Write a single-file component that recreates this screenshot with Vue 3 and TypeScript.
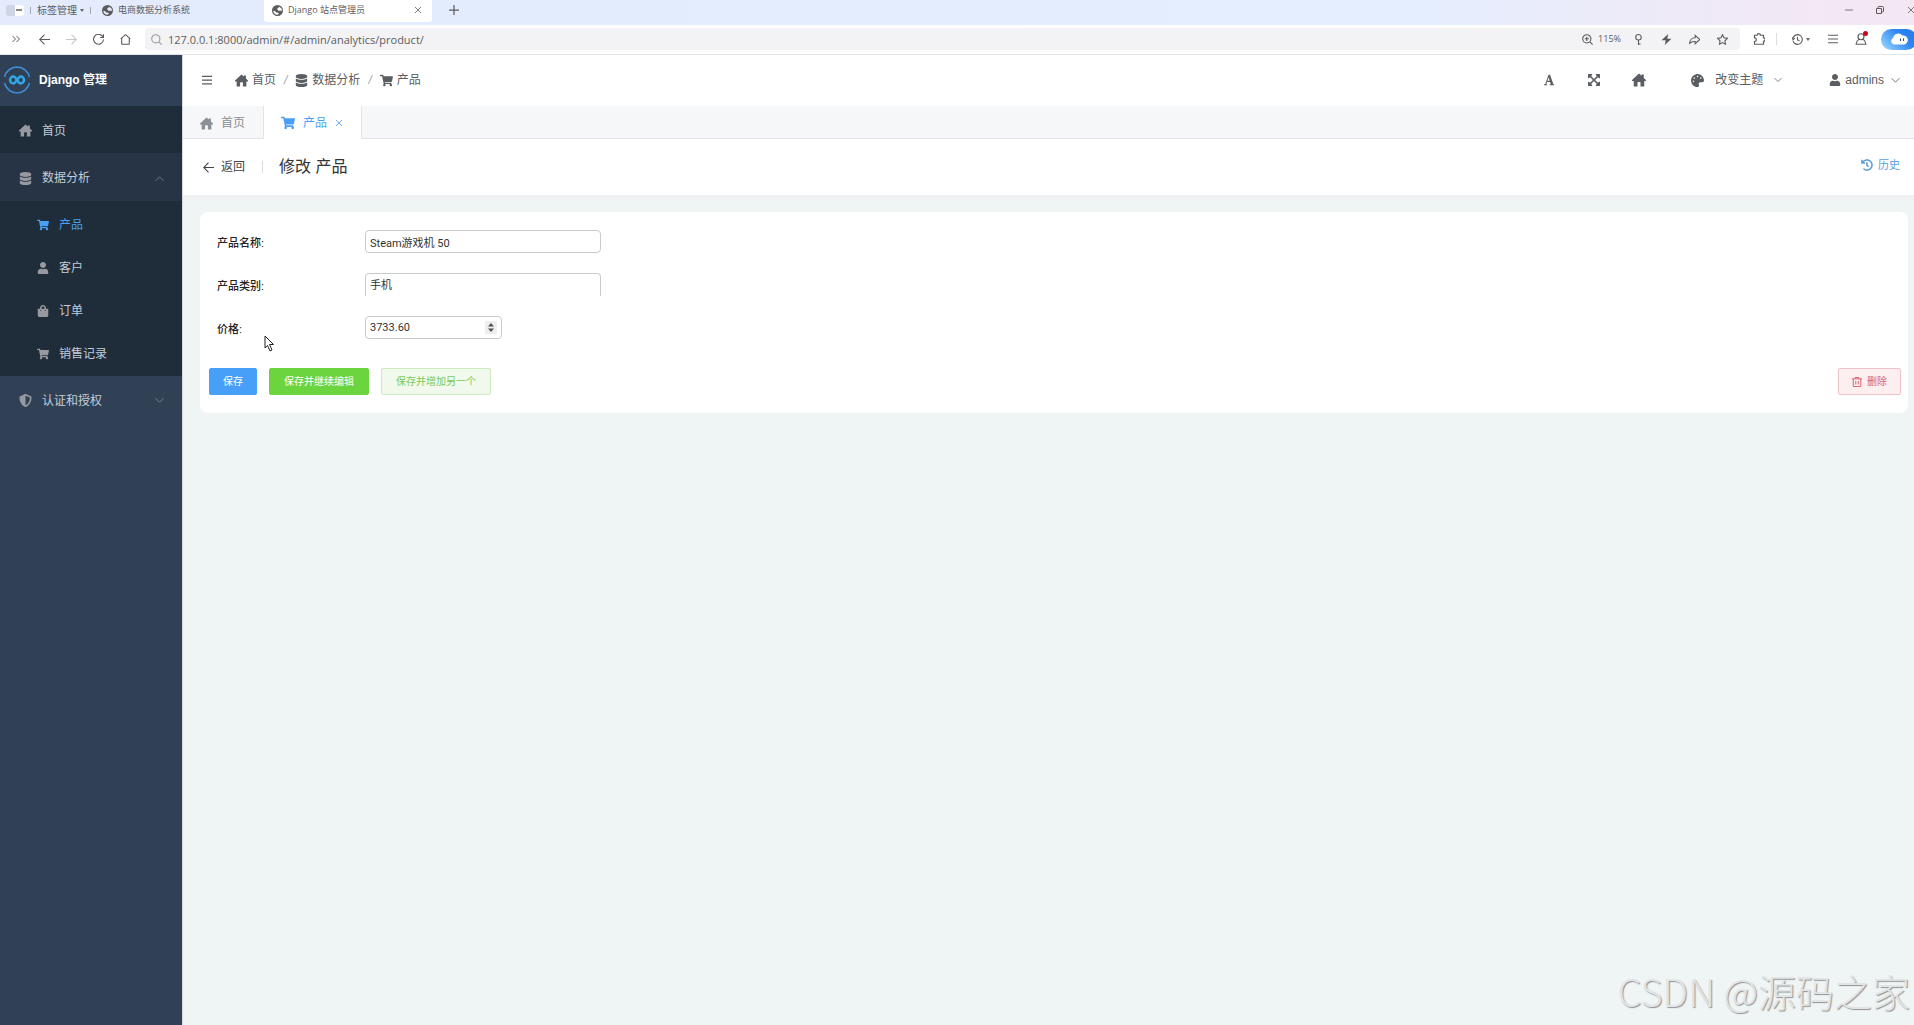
<script setup lang="ts">
import { h, ref, type FunctionalComponent } from 'vue'

interface Glyph { box: string; d: string; line?: boolean }

const glyphs: Record<string, Glyph> = {
  home: { box: '0 0 28 26', d: 'M14 0 L19 4.6 V2 H23.5 V8.8 L28 13 V15 H24.5 V26 H17 V18 Q17 17 16 17 H12 Q11 17 11 18 V26 H3.5 V15 H0 V13 Z' },
  database: { box: '0 0 448 512', d: 'M448 73.143v45.714C448 159.143 347.667 192 224 192S0 159.143 0 118.857V73.143C0 32.857 100.333 0 224 0s224 32.857 224 73.143zM448 176v102.857C448 319.143 347.667 352 224 352S0 319.143 0 278.857V176c48.125 33.143 136.208 48.572 224 48.572S399.874 209.143 448 176zm0 160v102.857C448 479.143 347.667 512 224 512S0 479.143 0 438.857V336c48.125 33.143 136.208 48.572 224 48.572S399.874 369.143 448 336z' },
  cart: { box: '0 0 576 512', d: 'M528.12 301.319l47.273-208C578.806 78.301 567.391 64 551.99 64H159.208l-9.166-44.81C147.758 8.021 137.93 0 126.529 0H24C10.745 0 0 10.745 0 24v16c0 13.255 10.745 24 24 24h69.883l70.248 343.435C147.325 417.1 136 435.222 136 456c0 30.928 25.072 56 56 56s56-25.072 56-56c0-15.674-6.447-29.835-16.824-40h209.647C430.447 426.165 424 440.326 424 456c0 30.928 25.072 56 56 56s56-25.072 56-56c0-22.172-12.888-41.332-31.579-50.405l5.517-24.276c3.413-15.018-8.002-29.319-23.403-29.319H218.117l-6.545-32h293.145c11.206 0 20.92-7.754 23.403-18.681z' },
  user: { box: '0 0 448 512', d: 'M224 256c70.7 0 128-57.3 128-128S294.7 0 224 0 96 57.3 96 128s57.3 128 128 128zm89.6 32h-16.7c-22.2 10.2-46.9 16-72.9 16s-50.6-5.8-72.9-16h-16.7C60.2 288 0 348.2 0 422.4V464c0 26.5 21.5 48 48 48h352c26.5 0 48-21.5 48-48v-41.6c0-74.2-60.2-134.4-134.4-134.4z' },
  bag: { box: '0 0 448 512', d: 'M352 160v-32C352 57.42 294.579 0 224 0 153.42 0 96 57.42 96 128v32H0v272c0 44.183 35.817 80 80 80h288c44.183 0 80-35.817 80-80V160h-96zm-192-32c0-35.29 28.71-64 64-64s64 28.71 64 64v32H160v-32zm160 120c-13.255 0-24-10.745-24-24s10.745-24 24-24 24 10.745 24 24-10.745 24-24 24zm-192 0c-13.255 0-24-10.745-24-24s10.745-24 24-24 24 10.745 24 24-10.745 24-24 24z' },
  shield: { box: '0 0 512 512', d: 'M466.5 83.7l-192-80a48.15 48.15 0 0 0-36.9 0l-192 80C27.7 91.1 16 108.6 16 128c0 198.5 114.5 335.7 221.5 380.3 11.8 4.9 25.1 4.9 36.9 0C360.1 472.6 496 349.3 496 128c0-19.4-11.7-36.9-29.5-44.3zM256.1 446.3l-.1-381 175.9 73.3c-3.3 151.4-82.1 261.1-175.8 307.7z' },
  palette: { box: '0 0 512 512', d: 'M204.3 5C104.9 24.4 24.8 104.3 5.2 203.4c-37 187 131.7 326.4 258.8 306.7 41.2-6.4 61.4-54.6 42.5-91.7-23.1-45.4 9.9-98.4 60.9-98.4h79.7c35.8 0 64.8-29.6 64.9-65.3C511.5 97.1 368.1-26.9 204.3 5zM96 320c-17.7 0-32-14.3-32-32s14.3-32 32-32 32 14.3 32 32-14.3 32-32 32zm32-128c-17.7 0-32-14.3-32-32s14.3-32 32-32 32 14.3 32 32-14.3 32-32 32zm128-64c-17.7 0-32-14.3-32-32s14.3-32 32-32 32 14.3 32 32-14.3 32-32 32zm128 64c-17.7 0-32-14.3-32-32s14.3-32 32-32 32 14.3 32 32-14.3 32-32 32z' },
  font: { box: '0 0 448 512', d: 'M440 440h-31L270 32h-70L64 440H8v40h136v-40h-36l34-104h126l34 104h-48v40h186v-40zM158 290L206 138 254 290z' },
  expand: { box: '0 32 448 448', d: 'M448 344v112a23.94 23.94 0 0 1-24 24H312c-21.39 0-32.09-25.9-17-41l36.2-36.2L224 295.6 116.77 402.9 153 439c15.09 15.1 4.39 41-17 41H24a23.94 23.94 0 0 1-24-24V344c0-21.4 25.89-32.1 41-17l36.19 36.2L184.46 256 77.18 148.7 41 185c-15.1 15.1-41 4.4-41-17V56a23.94 23.94 0 0 1 24-24h112c21.39 0 32.09 25.9 17 41l-36.2 36.2L224 216.4l107.23-107.3L295 73c-15.09-15.1-4.39-41 17-41h112a23.94 23.94 0 0 1 24 24v112c0 21.4-25.89 32.1-41 17l-36.19-36.2L263.54 256l107.28 107.3L407 327.1c15.1-15.2 41-4.5 41 16.9z' },
  history: { box: '0 0 512 512', d: 'M504 255.531c.253 136.64-111.18 248.372-247.82 248.468-59.015.042-113.223-20.53-155.822-54.911-11.077-8.94-11.905-25.541-1.839-35.607l11.267-11.267c8.609-8.609 22.353-9.551 31.891-1.984C173.062 425.135 212.781 440 256 440c101.705 0 184-82.311 184-184 0-101.705-82.311-184-184-184-48.814 0-93.149 18.969-126.068 49.932l50.754 50.754c10.08 10.08 2.941 27.314-11.313 27.314H24c-8.837 0-16-7.163-16-16V38.627c0-14.254 17.234-21.393 27.314-11.314l49.372 49.372C129.209 34.136 189.552 8 256 8c136.81 0 247.747 110.78 248 247.531zm-180.912 78.784l9.823-12.63c8.138-10.463 6.253-25.542-4.21-33.679L288 256.349V152c0-13.255-10.745-24-24-24h-16c-13.255 0-24 10.745-24 24v135.651l65.409 50.874c10.463 8.137 25.541 6.253 33.679-4.21z' },
  globe: { box: '0 0 22 22', d: 'M11 0A11 11 0 0 1 22 11A11 11 0 0 1 0 11A11 11 0 0 1 11 0ZM14 4L10 8L13 11.500H20C20 7 18 4.500 14 4ZM2.500 12C3 16 6.500 19.500 11 19.500L14 17L11 15H8L6 12Z' },
  bolt: { box: '0 0 20 20', d: 'M13 0 L1 11.500 H8.500 L7 20 L19 8.500 H11.500 Z' },
  up: { box: '0 0 16 16', d: 'M1 12 L8 5 L15 12', line: true },
  down: { box: '0 0 16 16', d: 'M1 4 L8 11 L15 4', line: true },
  menu: { box: '0 0 16 16', d: 'M0 2 H16 M0 8 H16 M0 14 H16', line: true },
  close: { box: '0 0 16 16', d: 'M2 2 L14 14 M14 2 L2 14', line: true },
  plus: { box: '0 0 16 16', d: 'M8 0 V16 M0 8 H16', line: true },
  minus: { box: '0 0 16 16', d: 'M0 8 H16', line: true },
  restore: { box: '0 0 16 16', d: 'M1 5 H11 V15 H1 Z M4 5 V3 Q4 1 6 1 H13 Q15 1 15 3 V10 Q15 12 13 12 H11', line: true },
  guillemet: { box: '0 0 16 16', d: 'M1 2 L7 8 L1 14 M9 2 L15 8 L9 14', line: true },
  left: { box: '0 0 16 16', d: 'M8 1 L1 8 L8 15 M1 8 H16', line: true },
  right: { box: '0 0 16 16', d: 'M8 1 L15 8 L8 15 M15 8 H0', line: true },
  reload: { box: '0 0 16 16', d: 'M14.500 4.500 A7.200 7.200 0 1 0 15.200 8 M15.200 0.500 V5 H10.500', line: true },
  house: { box: '0 0 16 16', d: 'M1 7 L8 1 L15 7 M2.500 6 V14 Q2.500 15 3.500 15 H12.500 Q13.500 15 13.500 14 V6', line: true },
  search: { box: '0 0 16 16', d: 'M7 1 A6 6 0 1 0 7 13 A6 6 0 1 0 7 1 M11.500 11.500 L15.500 15.500', line: true },
  zoom: { box: '0 0 16 16', d: 'M7 1 A6 6 0 1 0 7 13 A6 6 0 1 0 7 1 M11.500 11.500 L15.500 15.500 M7 4 V10 M4 7 H10', line: true },
  key: { box: '0 0 16 16', d: 'M8 .8 A4 4 0 1 0 8 8.800 A4 4 0 1 0 8 .8 M8 9 V16 M8 14.500 H11', line: true },
  share: { box: '0 0 16 16', d: 'M9 2 L15.500 8 L9 14 V11 C5 10.500 3 11.500 1 13.500 C1 9 4 5.500 9 5.500 Z', line: true },
  star: { box: '0 0 16 16', d: 'M8 1 L10.200 5.600 L15.200 6.300 L11.600 9.800 L12.400 14.800 L8 12.400 L3.600 14.800 L4.400 9.800 L.8 6.300 L5.800 5.600 Z', line: true },
  puzzle: { box: '0 0 16 16', d: 'M2 3 H5.500 A2.200 2.200 0 0 1 9.900 3 H14 V6.500 A2.200 2.200 0 0 1 14 11 V15 H2 V11.500 A2.500 2.500 0 0 0 2 6.500 Z', line: true },
  clock: { box: '0 0 16 16', d: 'M1.500 5.500 A7 7 0 1 1 1.500 10.500 M8 4 V8.500 L11 10 M.5 4.500 L1.500 8.500 L4 6', line: true },
  person: { box: '0 0 16 16', d: 'M8 1 A4 4 0 1 0 8 9 A4 4 0 1 0 8 1 M5 8.500 C3 10 1.500 12 1.500 15 H14.500 C14.500 12 13 10 11 8.500', line: true },
  trash: { box: '0 0 16 16', d: 'M0 3 H16 M5 3 V.8 H11 V3 M2 3 V15.200 H14 V3 M6 6.500 V12 M10 6.500 V12', line: true },
}

const Icon: FunctionalComponent<{ name: string; size?: number; weight?: number }> = (props) => {
  const g = glyphs[props.name]
  return h('svg', {
    width: props.size ?? 12,
    height: props.size ?? 12,
    viewBox: g.box,
    'aria-hidden': 'true',
    style: { flex: 'none', display: 'block' },
  }, [h('path', g.line
    ? { d: g.d, fill: 'none', stroke: 'currentColor', 'stroke-width': props.weight ?? 1.6 }
    : { d: g.d, fill: 'currentColor', 'fill-rule': 'evenodd' })])
}
Icon.props = ['name', 'size', 'weight']

const submenu = [
  { icon: 'cart', label: '产品', active: true },
  { icon: 'user', label: '客户', active: false },
  { icon: 'bag', label: '订单', active: false },
  { icon: 'cart', label: '销售记录', active: false },
]
const crumbs = [
  { icon: 'home', label: '首页' },
  { icon: 'database', label: '数据分析' },
  { icon: 'cart', label: '产品' },
]
const navTools = [
  { icon: 'left', label: '后退', dim: false },
  { icon: 'right', label: '前进', dim: true },
  { icon: 'reload', label: '刷新', dim: false },
  { icon: 'house', label: '主页', dim: false },
]
const addressTools = [
  { icon: 'key', label: '密码' },
  { icon: 'bolt', label: '加速' },
  { icon: 'share', label: '分享' },
  { icon: 'star', label: '收藏' },
]

const address = ref('127.0.0.1:8000/admin/#/admin/analytics/product/')
const name = ref('Steam游戏机 50')
const category = ref('手机')
const price = ref('3733.60')
</script>

<template>
  <div class="page">
    <header class="browser">
      <div class="tabstrip">
        <button class="toggle" aria-label="标签栏"><Icon name="minus" :size="6" :weight="4" /></button>
        <i class="rule"></i>
        <button class="manage">标签管理<i class="caret"></i></button>
        <i class="rule"></i>
        <div class="tab"><Icon name="globe" :size="11" /><span>电商数据分析系统</span></div>
        <div class="tab current">
          <Icon name="globe" :size="11" /><span>Django 站点管理员</span>
          <button class="tab-close" aria-label="关闭标签"><Icon name="close" :size="8" /></button>
        </div>
        <button class="new-tab" aria-label="新标签"><Icon name="plus" :size="10" :weight="2" /></button>
        <div class="window">
          <button aria-label="最小化"><Icon name="minus" :size="8" /></button>
          <button aria-label="还原"><Icon name="restore" :size="8" :weight="2" /></button>
          <button aria-label="关闭"><Icon name="close" :size="8" /></button>
        </div>
      </div>
      <div class="toolbar">
        <button class="more" aria-label="展开"><Icon name="guillemet" :size="8" :weight="2" /></button>
        <button v-for="t in navTools" :key="t.icon" class="nav" :class="{ dim: t.dim }" :aria-label="t.label">
          <Icon :name="t.icon" :size="11" />
        </button>
        <div class="address">
          <Icon name="search" :size="11" class="faint" />
          <input v-model="address" type="text" aria-label="地址" />
          <button class="zoom"><Icon name="zoom" :size="11" />115%</button>
          <button v-for="t in addressTools" :key="t.icon" class="tool" :aria-label="t.label">
            <Icon :name="t.icon" :size="11" />
          </button>
        </div>
        <button class="tool" aria-label="扩展"><Icon name="puzzle" :size="12" /></button>
        <i class="rule light"></i>
        <button class="recent" aria-label="历史记录"><Icon name="clock" :size="11" /><i class="caret"></i></button>
        <button class="tool" aria-label="菜单"><Icon name="menu" :size="10" /></button>
        <button class="tool account" aria-label="账户"><Icon name="person" :size="12" /><i class="dot"></i></button>
        <button class="cloud" aria-label="云助手">
          <svg width="18" height="12" viewBox="0 0 18 12" aria-hidden="true">
            <path d="M4 11.500A3.500 3.500 0 0 1 3 5A5.500 5.500 0 0 1 12.500 2.500A4.500 4.500 0 0 1 14 11.500Z" fill="#fff" />
            <path d="M10.500 5.500V8M13.500 5.500V8" stroke="#2b4a6b" />
          </svg>
        </button>
      </div>
    </header>

    <div class="app">
      <aside class="sidebar">
        <div class="brand">
          <svg width="28" height="28" viewBox="0 0 28 28" fill="none" aria-hidden="true">
            <g stroke="#3f8fdc" stroke-width="1.500">
              <path d="M1.500 11A13 13 0 0 1 14 1A13 13 0 0 1 26.500 11" />
              <path d="M1.500 17A13 13 0 0 0 14 27A13 13 0 0 0 26.500 17" />
            </g>
            <path d="M14 14C12.500 11.500 11.500 10.500 10.500 10.500A3.500 3.500 0 0 0 10.500 17.500C12.500 17.500 15.500 10.500 17.500 10.500A3.500 3.500 0 0 1 17.500 17.500C16.500 17.500 15.500 16.500 14 14" stroke="#2fa8e4" stroke-width="2.500" />
          </svg>
          <span>Django 管理</span>
        </div>
        <nav>
          <a href="#/" class="item dark"><Icon name="home" :size="13" /><span>首页</span></a>
          <a href="#/analytics" class="item open">
            <Icon name="database" :size="13" /><span>数据分析</span><Icon name="up" :size="9" :weight="1.2" />
          </a>
          <div class="sub">
            <a v-for="s in submenu" :key="s.label" href="#/admin/analytics" :class="{ active: s.active }">
              <Icon :name="s.icon" /><span>{{ s.label }}</span>
            </a>
          </div>
          <a href="#/auth" class="item">
            <Icon name="shield" :size="13" /><span>认证和授权</span><Icon name="down" :size="9" :weight="1.2" />
          </a>
        </nav>
      </aside>

      <main>
        <div class="topbar">
          <button class="burger" aria-label="折叠菜单"><Icon name="menu" :size="10" :weight="2" /></button>
          <nav class="crumbs">
            <template v-for="(c, i) in crumbs" :key="c.label">
              <i v-if="i" class="slash">/</i>
              <a href="#/"><Icon :name="c.icon" :size="13" />{{ c.label }}</a>
            </template>
          </nav>
          <button class="top-tool" aria-label="字体"><Icon name="font" /></button>
          <button class="top-tool" aria-label="全屏"><Icon name="expand" /></button>
          <button class="top-tool" aria-label="主页"><Icon name="home" :size="14" /></button>
          <button class="theme"><Icon name="palette" :size="13" /><span>改变主题</span><Icon name="down" :size="8" :weight="1.5" /></button>
          <button class="admin"><Icon name="user" /><span>admins</span><Icon name="down" :size="9" :weight="1.5" /></button>
        </div>

        <div class="tabs">
          <a href="#/" class="page-tab"><Icon name="home" :size="13" />首页</a>
          <div class="page-tab on">
            <Icon name="cart" :size="14" /><span>产品</span>
            <button aria-label="关闭产品"><Icon name="close" :size="8" /></button>
          </div>
        </div>

        <div class="heading">
          <button class="back"><Icon name="left" :size="11" />返回</button>
          <i class="rule light"></i>
          <h1>修改 产品</h1>
          <a href="#/history" class="history"><Icon name="history" />历史</a>
        </div>

        <form class="card" @submit.prevent>
          <div class="field">
            <label for="name">产品名称:</label>
            <input id="name" v-model="name" type="text" />
          </div>
          <div class="field">
            <label for="category">产品类别:</label>
            <select id="category" v-model="category"><option>手机</option></select>
          </div>
          <div class="field">
            <label for="price">价格:</label>
            <div class="number">
              <input id="price" v-model="price" type="number" step="0.01" />
              <svg width="12" height="13" viewBox="0 0 12 13" aria-hidden="true">
                <rect width="12" height="13" fill="#eee" />
                <path d="M3 5.500L6 2L9 5.500ZM3 7.500L6 11L9 7.500Z" fill="#505050" />
              </svg>
            </div>
          </div>
          <div class="actions">
            <button class="btn blue">保存</button>
            <button class="btn green">保存并继续编辑</button>
            <button class="btn pale">保存并增加另一个</button>
            <button class="btn danger"><Icon name="trash" :size="10" />删除</button>
          </div>
        </form>
      </main>
    </div>

    <svg class="pointer" width="11" height="17" viewBox="0 0 11 17" aria-hidden="true">
      <path d="M1 1V13L3.500 10.500L6 16L8 15L5.500 9.500H9.500Z" fill="#fff" stroke="#222" />
    </svg>
    <div class="watermark">CSDN @源码之家</div>
  </div>
</template>

<style>
body { background: #eff4f5; }
</style>

<style scoped>
.page {
  position: relative;
  display: flex;
  flex-direction: column;
  min-height: 100vh;
  overflow: hidden;
  font-family: "Liberation Sans", "Noto Sans CJK SC", sans-serif;
  font-size: 12px;
  line-height: 16px;
  color: #5a5d61;
}
.page * { box-sizing: border-box; }
button { display: flex; align-items: center; justify-content: center; padding: 0; border: 0; background: none; color: inherit; font: inherit; white-space: nowrap; }
a { color: inherit; text-decoration: none; }
input, select { font-family: Roboto, "Noto Sans CJK SC", sans-serif; outline: 0; }
.rule { width: 1px; height: 7px; background: #a3a8b5; }
.rule.light { height: 12px; background: #dcdde0; }
.caret { border: 2px solid transparent; border-top: 3px solid #666; border-bottom: 0; }

.browser { font-family: "Open Sans", "Noto Sans CJK SC", sans-serif; color: #5c5c5f; }
.tabstrip { display: flex; align-items: center; height: 25px; padding-left: 6px; background: linear-gradient(90deg, #e3ebfc 0%, #e4eeff 73%, #ecebf9 84%, #f4e7f4 97%); font-size: 9px; }
.tabstrip > * { margin-bottom: 5px; }
.toggle { justify-content: flex-end; width: 18px; height: 11px; margin-right: 6px; padding-right: 2px; border-radius: 3px; background: linear-gradient(90deg, #cfd5e4 50%, #fff 50%); }
.manage { gap: 3px; padding: 0 6px; font-size: 10px; }
.tab { display: flex; align-items: center; gap: 5px; width: 173px; height: 25px; padding: 0 8px 0 11px; }
.tab.current { width: 168px; height: 22px; margin-bottom: 3px; padding: 0 10px 2px 8px; background: #fff; border-radius: 0 0 3px 3px; }
.tab-close { margin-left: auto; }
.new-tab { width: 22px; height: 20px; margin-left: 11px; }
.window { display: flex; gap: 23px; margin-left: auto; margin-right: -1px; }
.toolbar { display: flex; align-items: center; height: 30px; padding-bottom: 1px; background: #fff; border-bottom: 1px solid #e4e4e6; }
.more { width: 31px; height: 22px; }
.nav { width: 27px; height: 22px; }
.dim { color: #c6c6c8; }
.faint { color: #9b9b9f; }
.address { display: flex; flex: 1; align-items: center; height: 22px; margin: 0 5px 0 6px; padding: 0 4px 0 6px; border-radius: 4px; background: #f3f3f5; }
.address input { flex: 1; min-width: 0; margin-left: 6px; padding: 0; border: 0; background: none; color: #5c5c5f; font: 11px "Open Sans", sans-serif; }
.zoom { gap: 5px; margin-right: 3px; font-size: 9px; }
.tool { width: 28px; height: 22px; flex: none; }
.recent { flex: none; gap: 3px; margin: 0 9px 0 15px; }
.account { position: relative; }
.dot { position: absolute; top: 3px; right: 7px; width: 5px; height: 5px; border-radius: 50%; background: #d2001a; }
.toolbar .rule { margin-left: 3px; }
.cloud { flex: none; width: 36px; height: 21px; margin: 0 -3px 0 6px; border-radius: 11px; background: linear-gradient(45deg, #9fdcff, #2f86f3 60%, #1f78f0); }

.app { display: flex; flex: 1; }
.sidebar { flex: none; width: 182px; background: #304156; color: #c3ccd8; }
.brand { display: flex; align-items: center; gap: 8px; height: 51px; padding: 0 0 1px 3px; color: #fff; font-size: 12px; font-weight: 700; }
.item { display: flex; align-items: center; gap: 10px; height: 47px; padding: 2px 18px 0 19px; }
.item span { flex: 1; }
.item svg, .sub svg { color: #96999f; }
.dark { background: #1f2d3a; }
.open { height: 48px; background: #263445; }
.sub { padding: 2px 0 1px; background: #1f2d3a; }
.sub a { display: flex; align-items: center; gap: 10px; height: 43px; padding-left: 37px; }
.sub .active, .sub .active svg { color: #4a9ff5; }

main { flex: 1; min-width: 0; border-left: 1px solid #d5dade; }
.topbar { display: flex; align-items: center; height: 51px; padding: 0 14px 1px 0; background: #fff; }
.burger { margin-left: 19px; }
.crumbs { display: flex; flex: 1; align-items: center; margin-left: 23px; }
.crumbs a { display: flex; align-items: center; gap: 4px; }
.crumbs svg { width: auto; }
.crumbs .slash { margin: 0 8px; color: #a0a3a8; }
.top-tool { width: 45px; height: 30px; }
.theme { gap: 11px; margin: 0 47px 0 30px; }
.admin { gap: 4px; }
.admin span { margin-right: 3px; }

.tabs { display: flex; height: 33px; background: #f5f7f9; border-bottom: 1px solid #e0e4ea; }
.page-tab { display: flex; align-items: center; gap: 8px; height: 33px; padding: 2px 18px 0 17px; border-right: 1px solid #e0e4ea; border-bottom: 1px solid #e0e4ea; color: #8b8f97; }
.page-tab.on { border-bottom-color: #fff; background: #fff; color: #4a9ff5; }

.heading { display: flex; align-items: center; height: 61px; padding: 0 14px 0 20px; border-bottom: 5px solid #f0f1f2; background: #fff; color: #444; }
.back { gap: 7px; margin-right: 17px; }
h1 { flex: 1; margin: 0 0 0 16px; font-size: 16px; line-height: 20px; font-weight: 400; color: #333; }
.history { display: flex; align-items: center; gap: 5px; margin-bottom: 4px; font-size: 11px; color: #5a9fdc; }

.card { margin: 12px 6px 0 17px; padding: 18px 7px 18px 9px; border-radius: 8px; background: #fff; }
.field { display: flex; align-items: center; height: 23px; margin: 0 0 20px 8px; }
.field label { width: 148px; padding-top: 2px; font-size: 11px; font-weight: 500; color: #222; }
.field input, .field select { width: 236px; height: 23px; padding: 0 4px; border: 1px solid #c8cacd; border-radius: 4px; background: #fff; color: #333; font-size: 11px; }
.field select { appearance: none; border-bottom: 0; border-radius: 4px 4px 0 0; }
.number { display: flex; align-items: center; width: 137px; height: 23px; padding-right: 4px; border: 1px solid #c8cacd; border-radius: 4px; }
.number input { flex: 1; min-width: 0; height: 21px; border: 0; appearance: textfield; background: none; }
.number input::-webkit-inner-spin-button { appearance: none; }
.actions { display: flex; gap: 12px; margin-top: 29px; }
.btn { gap: 5px; height: 27px; padding: 0 14px; border: 1px solid; border-radius: 2px; font-size: 10px; }
.blue { padding: 0 13px; background: #479ff8; border-color: #479ff8; color: #fff; }
.green { background: #6cd43e; border-color: #6cd43e; color: #fff; }
.pale { background: #f0f9eb; border-color: #cdebbd; color: #7cc95a; }
.danger { padding: 0 13px; margin-left: auto; background: #fdeeef; border-color: #f0c3c8; color: #d5666f; }

.pointer { position: absolute; left: 264px; top: 335px; }
.watermark { position: absolute; right: 4px; bottom: 6px; font: 300 38px/56px "Noto Sans CJK SC", sans-serif; color: #e2e4e5; text-shadow: 1px 1px 1px #8f9294; }
</style>
